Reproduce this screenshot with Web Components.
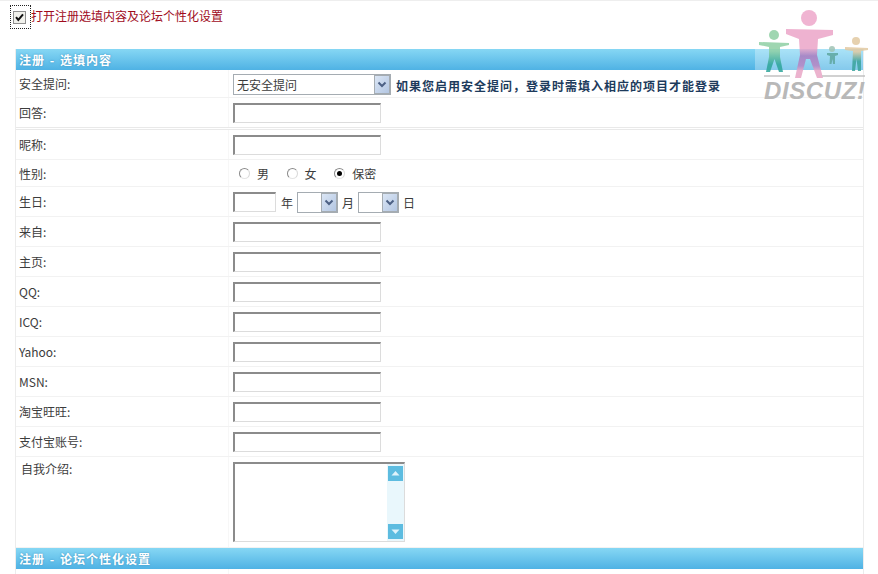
<!DOCTYPE html>
<html lang="zh">
<head>
<meta charset="utf-8">
<title>注册</title>
<style>
  html, body { margin: 0; height: 574px; overflow: hidden; background: #fff; }
  body { font: 12px "Noto Sans CJK SC", "Liberation Sans", sans-serif; color: #333; }
</style>
</head>
<body>
<reg-page>
  <reg-toggle>打开注册选填内容及论坛个性化设置</reg-toggle>
  <reg-table>
    <reg-head>注册 - 选填内容</reg-head>
    <reg-row label="安全提问:" h="28">
      <reg-select w="158" text="无安全提问"></reg-select>
      <b class="hint" style="margin-left:5px;font-size:12px;letter-spacing:1px;color:#1d3b5c;white-space:nowrap;padding-top:2px">如果您启用安全提问，登录时需填入相应的项目才能登录</b>
    </reg-row>
    <reg-row label="回答:" h="32" double><reg-input></reg-input></reg-row>
    <reg-row label="昵称:" h="30"><reg-input></reg-input></reg-row>
    <reg-row label="性别:" h="27">
      <reg-radio>男</reg-radio><reg-radio>女</reg-radio><reg-radio checked>保密</reg-radio>
    </reg-row>
    <reg-row label="生日:" h="30">
      <reg-input w="43"></reg-input><span style="margin:0 4px 0 5px">年</span>
      <reg-select w="41"></reg-select><span style="margin:0 4px">月</span>
      <reg-select w="41"></reg-select><span style="margin-left:4px">日</span>
    </reg-row>
    <reg-row label="来自:"><reg-input></reg-input></reg-row>
    <reg-row label="主页:"><reg-input></reg-input></reg-row>
    <reg-row label="QQ:"><reg-input></reg-input></reg-row>
    <reg-row label="ICQ:"><reg-input></reg-input></reg-row>
    <reg-row label="Yahoo:"><reg-input></reg-input></reg-row>
    <reg-row label="MSN:"><reg-input></reg-input></reg-row>
    <reg-row label="淘宝旺旺:"><reg-input></reg-input></reg-row>
    <reg-row label="支付宝账号:"><reg-input></reg-input></reg-row>
    <reg-row label="自我介绍:" h="91" top><reg-textarea></reg-textarea></reg-row>
    <reg-head>注册 - 论坛个性化设置</reg-head>
    <reg-row label="" h="30" top><reg-input w="91"></reg-input></reg-row>
  </reg-table>
  <discuz-logo></discuz-logo>
</reg-page>

<script>
// little helper so every element is the same few lines
function define(name, css, html, init) {
  customElements.define(name, class extends HTMLElement {
    connectedCallback() {
      if (this.shadowRoot) return;
      this.attachShadow({mode: "open"});
      this.shadowRoot.innerHTML = `<style>${css}</style>${typeof html == "function" ? html(this) : html}`;
      if (init) init(this);
    }
  });
}

define("reg-page", `
  :host { display: block; position: relative; height: 573px; overflow: hidden; border-top: 1px solid #eee; }
`, `<slot></slot>`);

define("reg-toggle", `
  :host { display: flex; align-items: center; height: 48px; padding: 2px 0 18px 10px; box-sizing: border-box; color: #a00b1c; line-height: 16px; }
  .focus { display: flex; align-items: center; justify-content: center; width: 21px; height: 24px; box-sizing: border-box; border: 1px dotted #222; padding-right: 3px; }
  .box { width: 13px; height: 13px; box-sizing: border-box; border: 1px solid #8f8f8f; background: #f1f1ec; display: block; }
  span.t { margin-top: -2px; }
`, `<span class="focus"><svg class="box" viewBox="0 0 11 11"><path d="M2 5.2 L4.3 8 L9 2.4" fill="none" stroke="#111" stroke-width="2"/></svg></span><span class="t"><slot></slot></span>`);

define("reg-table", `
  :host { display: block; margin: 0 14px 0 15px; border: solid #ececec; border-width: 0 1px 0 1px; }
`, `<slot></slot>`);

define("reg-head", `
  :host { display: flex; align-items: center; height: 21px; padding-left: 3px; font-weight: bold; color: #fff; background: linear-gradient(#86d7f4, #4fb2e4); text-shadow: 0 0 2px #3a8fbc; letter-spacing: 1px; word-spacing: 1px; }
`, `<slot></slot>`);

define("reg-row", `
  :host { display: grid; grid-template-columns: 213px 1fr; box-sizing: border-box; border-bottom: 1px solid #f2f2f2; }
  :host([double]) { border-bottom: 3px double #e9e9e9; }
  .label { padding-left: 3px; border-right: 1px solid #f7f7f7; display: flex; align-items: center; color: #3c3c3c; }
  .value { display: flex; align-items: center; padding: 1px 0 0 4px; color: #3c3c3c; }
  :host([top]) .label { align-items: flex-start; padding: 3px 0 0 5px; }
  :host([top]) .value { align-items: flex-start; padding-top: 5px; }
`, el => `<div class="label">${el.getAttribute("label")}</div><div class="value"><slot></slot></div>`,
  el => { el.style.height = (el.getAttribute("h") || 30) + "px"; });

define("reg-input", `
  :host { display: block; height: 20px; width: 148px; box-sizing: border-box; background: #fff; border: solid #dcdcdc; border-width: 1px; border-top: 2px solid #8b8b8b; border-left: 2px solid #8b8b8b; }
`, ``, el => { if (el.getAttribute("w")) el.style.width = el.getAttribute("w") + "px"; });

define("reg-select", `
  :host { display: flex; align-items: center; justify-content: space-between; height: 21px; box-sizing: border-box; border: 1px solid #a5acb2; background: #fff; padding-left: 3px; color: #3c3c3c; flex: none; }
  svg { display: block; width: 16px; height: 19px; }
`, el => `<span>${el.getAttribute("text") || ""}</span><svg viewBox="0 0 16 19"><defs><linearGradient id="g" x1="0" y1="0" x2="1" y2="1"><stop offset="0" stop-color="#dbe6f5"/><stop offset="1" stop-color="#b3c6e2"/></linearGradient></defs><rect width="16" height="19" fill="#a5acb2"/><rect x="1" y="1" width="14" height="17" fill="url(#g)"/><path d="M4.5 7.5 L8 11 L11.5 7.5" fill="none" stroke="#4d6185" stroke-width="2"/></svg>`,
  el => { el.style.width = el.getAttribute("w") + "px"; });

define("reg-radio", `
  :host { display: flex; align-items: center; margin-left: 6px; margin-right: 11.6px; }
  i { display: block; width: 11px; height: 11px; box-sizing: border-box; border-radius: 50%; border: 1px solid; border-color: #8a8a8a #d8d8d8 #e4e4e4 #8a8a8a; margin-right: 7px; position: relative; }
  :host([checked]) i::after { content: ""; position: absolute; left: 2px; top: 2px; width: 5px; height: 5px; border-radius: 50%; background: #000; }
`, `<i></i><slot></slot>`);

define("reg-textarea", `
  :host { display: flex; justify-content: flex-end; width: 172px; height: 80px; box-sizing: border-box; border: solid #dcdcdc; border-width: 1px; border-top: 2px solid #8b8b8b; border-left: 2px solid #8b8b8b; background: #fff; }
  .bar { width: 17px; background: #e9f7fc; display: flex; flex-direction: column; justify-content: space-between; padding: 2px 1px; box-sizing: border-box; }
  svg { display: block; width: 15px; height: 15px; }
`, `<div class="bar">
  <svg viewBox="0 0 15 15"><rect width="15" height="15" fill="#5dbce0"/><path d="M3.5 9.500 L7.5 5 L11.5 9.500Z" fill="#dff3fb"/></svg>
  <svg viewBox="0 0 15 15"><rect width="15" height="15" fill="#5dbce0"/><path d="M3.5 5.500 L7.5 10 L11.5 5.500Z" fill="#dff3fb"/></svg>
</div>`);

// logo lies over the blue band, so this one is absolute
define("discuz-logo", `
  :host { display: block; position: absolute; left: 755px; top: 6px; width: 113px; height: 97px; pointer-events: none; }
  .wash { position: absolute; left: 0; top: 42px; width: 108px; height: 21px; background: rgba(255,255,255,.3); }
  svg { position: absolute; left: 0; top: 0; opacity: .85; }
  .name { position: absolute; left: 9px; top: 70px; font: italic bold 24px/28px "Liberation Sans", sans-serif; color: #b8b8b8; letter-spacing: .6px; white-space: nowrap; }
`, `<div class="wash"></div>
<svg width="113" height="97" viewBox="0 0 113 97">
  <defs>
    <linearGradient id="pk" x1="0" y1="0" x2="0" y2="1"><stop offset=".4" stop-color="#eca5c8"/><stop offset=".55" stop-color="#a97cc0"/><stop offset=".75" stop-color="#b787c4"/><stop offset=".85" stop-color="#e9a6c6"/></linearGradient>
    <linearGradient id="gr" x1="0" y1="0" x2="0" y2="1"><stop offset=".3" stop-color="#8fd0a4"/><stop offset=".75" stop-color="#2ea59a"/></linearGradient>
    <linearGradient id="tn" x1="0" y1="0" x2="0" y2="1"><stop offset=".2" stop-color="#e2c9a2"/><stop offset=".6" stop-color="#3aa39c"/></linearGradient>
  </defs>
  <circle cx="54" cy="11" r="8" fill="#eea8cb"/>
  <path d="M31 22 L78 23 L78 28 L63 32 L62 48 L68 71 L62 71 L55 52 L51 52 L46 71 L40 71 L45 48 L44 32 L31 27Z" fill="url(#pk)"/>
  <circle cx="19" cy="28" r="5" fill="#8fd0a4"/>
  <path d="M4 35 L34 36 L34 38 L25 40 L25 50 L28 65 L24 65 L19.500 52 L15 65 L11 65 L14 50 L14 40 L4 38Z" fill="url(#gr)"/>
  <circle cx="77" cy="42" r="3" fill="#9fc3b4"/>
  <path d="M72 46 L83 46 L83 48 L80 49 L80 57 L78 57 L77.500 52 L76.500 57 L74.500 57 L75 49 L72 48Z" fill="#5fa7a0"/>
  <circle cx="101" cy="34" r="4" fill="#e2c9a2"/>
  <path d="M90 40 L113 41 L113 43 L106 44 L106 64 L103 64 L101.500 52 L100 64 L97 64 L98 44 L90 43Z" fill="url(#tn)"/>
  <path d="M9 69 H35 M67 69 H110" stroke="#b9b9b9" stroke-width="1.300"/>
</svg>
<div class="name">DISCUZ!</div>`);
</script>
</body>
</html>
